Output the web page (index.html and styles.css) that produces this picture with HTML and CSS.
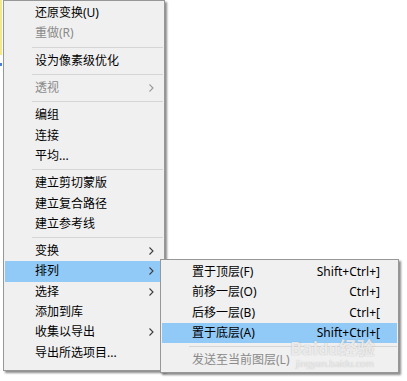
FILE: index.html
```html
<!DOCTYPE html>
<html lang="zh-CN">

<head>
    <meta charset="UTF-8">
    <title>右键菜单</title>
    <link rel="stylesheet" href="styles.css">
</head>

<body>
    <div class="screen">
        <div class="strip">
            <span class="strip-yellow"></span>
            <span class="strip-dot"></span>
        </div>

        <div class="menu main-menu">
            <div class="item">还原变换(U)</div>
            <div class="item disabled">重做(R)</div>
            <div class="sep"></div>
            <div class="item">设为像素级优化</div>
            <div class="sep"></div>
            <div class="item disabled">透视<svg class="arrow" width="5" height="8" viewBox="0 0 5 8"><polyline points="0.5,0.5 4,4 0.5,7.5" /></svg></div>
            <div class="sep"></div>
            <div class="item">编组</div>
            <div class="item">连接</div>
            <div class="item">平均...</div>
            <div class="sep"></div>
            <div class="item">建立剪切蒙版</div>
            <div class="item">建立复合路径</div>
            <div class="item">建立参考线</div>
            <div class="sep"></div>
            <div class="item">变换<svg class="arrow" width="5" height="8" viewBox="0 0 5 8"><polyline points="0.5,0.5 4,4 0.5,7.5" /></svg></div>
            <div class="item active">排列<svg class="arrow" width="5" height="8" viewBox="0 0 5 8"><polyline points="0.5,0.5 4,4 0.5,7.5" /></svg></div>
            <div class="item">选择<svg class="arrow" width="5" height="8" viewBox="0 0 5 8"><polyline points="0.5,0.5 4,4 0.5,7.5" /></svg></div>
            <div class="item">添加到库</div>
            <div class="item">收集以导出<svg class="arrow" width="5" height="8" viewBox="0 0 5 8"><polyline points="0.5,0.5 4,4 0.5,7.5" /></svg></div>
            <div class="item">导出所选项目...</div>
        </div>

        <!-- submenu for 排列 -->
        <div class="menu sub-menu">
            <div class="item">置于顶层(F)<span class="keys">Shift+Ctrl+]</span></div>
            <div class="item">前移一层(O)<span class="keys">Ctrl+]</span></div>
            <div class="item">后移一层(B)<span class="keys">Ctrl+[</span></div>
            <div class="item active">置于底层(A)<span class="keys">Shift+Ctrl+[</span></div>
            <div class="sep"></div>
            <div class="item disabled">发送至当前图层(L)</div>
        </div>

        <div class="watermark">
            <div class="wm-logo">Bai<span class="wm-paw">du</span>经验</div>
            <div class="wm-url">jingyan.baidu.com</div>
        </div>
    </div>
</body>

</html>
```

FILE: styles.css
```css
body,
html {
    margin: 0;
    padding: 0;
    background: #fff;
    font-family: "Noto Sans", "Noto Sans CJK SC", sans-serif;
    font-size: 12px;
    color: #000;
}

.screen {
    position: relative;
    width: 407px;
    height: 381px;
    display: flex;
    align-items: flex-start;
    overflow: hidden;
}

.strip {
    width: 3px;
    display: flex;
    flex-direction: column;
}

.strip-yellow {
    height: 55px;
    width: 2px;
    background: #f3e88a;
}

.strip-dot {
    margin-top: 8px;
    height: 3px;
    width: 2px;
    background: #4a7fd8;
}

.menu {
    background: #f0f0f0;
    border: 1px solid #979797;
    box-sizing: border-box;
    padding: 2px 1px;
    box-shadow: 2px 2px 2px rgba(0, 0, 0, 0.45);
}

.main-menu {
    width: 162px;
    height: 371px;
}

.sub-menu {
    position: absolute;
    left: 160px;
    top: 259px;
    width: 239px;
    height: 114px;
}

.item {
    height: 20.3px;
    display: flex;
    align-items: center;
    padding-left: 30px;
    padding-right: 9px;
    white-space: nowrap;
    line-height: 1;
}

.sub-menu .item {
    padding-right: 17px;
}

.item.active {
    background: #91c9f7;
}

.item.disabled {
    color: #8a8a8a;
}

.arrow {
    margin-left: auto;
    fill: none;
    stroke: #3c3c3c;
    stroke-width: 1.1;
}

.item.disabled .arrow {
    stroke: #9a9a9a;
}

.keys {
    margin-left: auto;
}

.sep {
    height: 1px;
    background: #d5d5d5;
    margin: 3px 0 3px 27px;
}

/* watermark over the submenu */
.watermark {
    position: absolute;
    left: 290px;
    top: 340px;
    color: rgba(255, 255, 255, 0.75);
    text-shadow: 0 0 1px rgba(120, 120, 120, 0.6);
    pointer-events: none;
}

.wm-logo {
    font-size: 18px;
    font-weight: bold;
    line-height: 17px;
}

.wm-paw {
    font-size: 16px;
}

.wm-url {
    font-size: 9px;
    margin-left: 6px;
    line-height: 12px;
}
```
